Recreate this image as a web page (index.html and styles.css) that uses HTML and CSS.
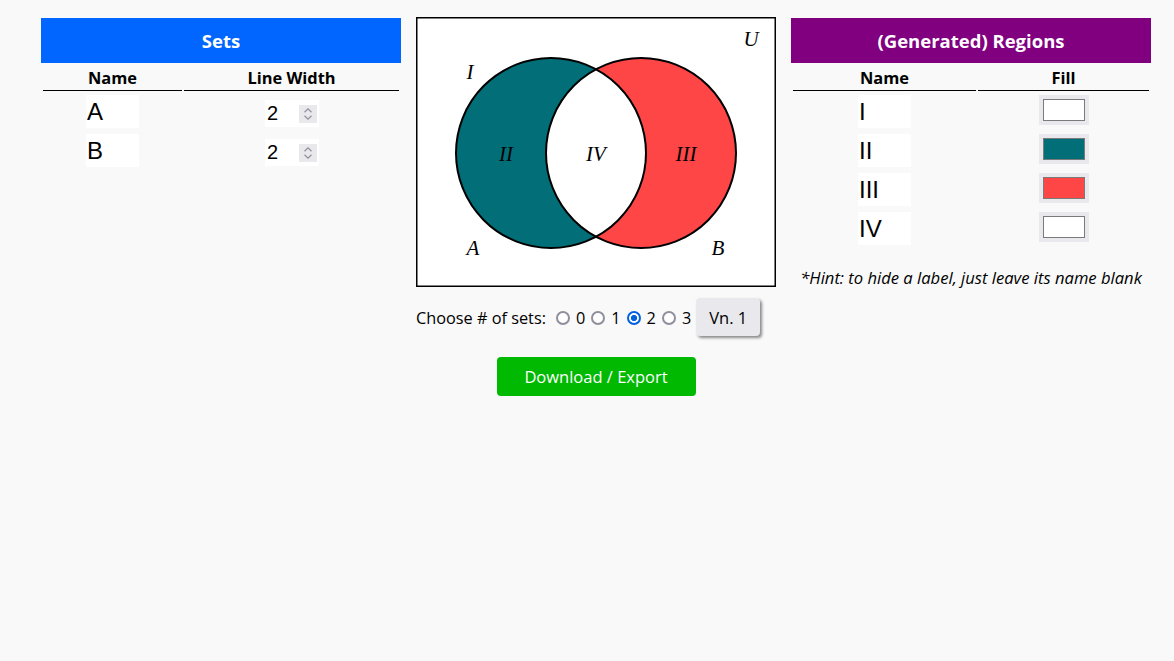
FILE: index.html
```html
<!DOCTYPE html>
<html>
<head>
<meta charset="utf-8">
<link rel="stylesheet" href="styles.css">
</head>
<body>
<div class="page">
  <section class="panel">
    <h2 class="panel-head sets-head">Sets</h2>
    <div class="grid sets-grid">
      <div class="th">Name</div>
      <div class="th">Line Width</div>
      <div class="cell"><input class="name-input" type="text" value="A"></div>
      <div class="cell">
        <div class="num-box">
          <input class="num-input" type="text" value="2">
          <span class="spin"><svg width="18" height="18" viewBox="0 0 18 18"><path d="M5.5 7.2 L9 3.8 L12.5 7.2 M5.5 10.8 L9 14.2 L12.5 10.8" fill="none" stroke="#8f8f9d" stroke-width="1.2"/></svg></span>
        </div>
      </div>
      <div class="cell"><input class="name-input" type="text" value="B"></div>
      <div class="cell">
        <div class="num-box">
          <input class="num-input" type="text" value="2">
          <span class="spin"><svg width="18" height="18" viewBox="0 0 18 18"><path d="M5.5 7.2 L9 3.8 L12.5 7.2 M5.5 10.8 L9 14.2 L12.5 10.8" fill="none" stroke="#8f8f9d" stroke-width="1.2"/></svg></span>
        </div>
      </div>
    </div>
  </section>

  <section class="middle">
    <div class="venn">
      <svg width="360" height="270" viewBox="0 0 360 270">
        <rect x="0.75" y="0.75" width="358.5" height="268.5" fill="#fff" stroke="#000" stroke-width="1.5"/>
        <circle cx="135" cy="136" r="95" fill="#026f78"/>
        <circle cx="225" cy="136" r="95" fill="#ff4646"/>
        <path d="M180,52.33 A95,95 0 0,1 180,219.67 A95,95 0 0,1 180,52.33 Z" fill="#fff"/>
        <circle cx="135" cy="136" r="95" fill="none" stroke="#000" stroke-width="2"/>
        <circle cx="225" cy="136" r="95" fill="none" stroke="#000" stroke-width="2"/>
        <g class="lbl">
          <text x="335" y="22">U</text>
          <text x="54" y="55">I</text>
          <text x="57" y="231">A</text>
          <text x="302" y="231">B</text>
          <text x="90" y="137">II</text>
          <text x="180" y="137">IV</text>
          <text x="270" y="137">III</text>
        </g>
      </svg>
    </div>
    <div class="choose">
      <span class="choose-label">Choose # of sets:</span>
      <label class="opt"><input type="radio" name="n">0</label>
      <label class="opt"><input type="radio" name="n">1</label>
      <label class="opt"><input type="radio" name="n" checked>2</label>
      <label class="opt"><input type="radio" name="n">3</label>
      <button class="vn">Vn. 1</button>
    </div>
    <button class="download">Download / Export</button>
  </section>

  <section class="panel">
    <h2 class="panel-head regions-head">(Generated) Regions</h2>
    <div class="grid regions-grid">
      <div class="th">Name</div>
      <div class="th">Fill</div>
      <div class="cell"><input class="name-input" type="text" value="I"></div>
      <div class="cell"><input class="color-input" type="color" value="#ffffff"></div>
      <div class="cell"><input class="name-input" type="text" value="II"></div>
      <div class="cell"><input class="color-input" type="color" value="#026f78"></div>
      <div class="cell"><input class="name-input" type="text" value="III"></div>
      <div class="cell"><input class="color-input" type="color" value="#ff4646"></div>
      <div class="cell"><input class="name-input" type="text" value="IV"></div>
      <div class="cell"><input class="color-input" type="color" value="#ffffff"></div>
    </div>
    <p class="hint">*Hint: to hide a label, just leave its name blank</p>
  </section>
</div>
</body>
</html>
```

FILE: styles.css
```css
html, body {
  margin: 0;
  padding: 0;
  background: #f9f9f9;
  font-family: "Open Sans", "Noto Sans", sans-serif;
  color: #000;
}

.page {
  display: flex;
  align-items: flex-start;
  gap: 15px;
  padding: 17px 0 0 41px;
}

.panel {
  width: 360px;
  margin-top: 1px;
}

.panel-head {
  margin: 0;
  height: 45px;
  line-height: 45px;
  text-align: center;
  color: #fff;
  font-size: 18.5px;
  font-weight: 700;
}

.sets-head { background: #0066ff; }
.regions-head { background: #800080; }

.grid {
  display: grid;
  column-gap: 2px;
  row-gap: 6px;
  padding: 0 2px;
}

.sets-grid { grid-template-columns: 139px 215px; }
.regions-grid { grid-template-columns: 183px 171px; }

.th {
  font-size: 16.4px;
  font-weight: 700;
  text-align: center;
  height: 27px;
  line-height: 30px;
  border-bottom: 1px solid #000;
  margin-bottom: -2px;
}

.cell {
  display: flex;
  justify-content: center;
  align-items: flex-start;
  height: 33px;
}

.name-input {
  box-sizing: border-box;
  width: 53px;
  height: 33px;
  border: none;
  outline: none;
  background: #fff;
  padding: 0 1px;
  font-family: "Liberation Sans", Arial, sans-serif;
  font-size: 24px;
  color: #000;
}

.num-box {
  box-sizing: border-box;
  width: 54px;
  height: 27px;
  margin-top: 5px;
  margin-left: 1px;
  background: #fff;
  display: flex;
  align-items: center;
  padding: 0 2px 0 2px;
}

.num-input {
  width: 32px;
  height: 25px;
  border: none;
  outline: none;
  background: transparent;
  padding: 0;
  font-family: "Liberation Sans", Arial, sans-serif;
  font-size: 20px;
  color: #000;
}

.spin {
  width: 18px;
  height: 18px;
  background: #e9e9ed;
  display: block;
}

.spin svg { display: block; }

.color-input {
  -webkit-appearance: none;
  appearance: none;
  box-sizing: border-box;
  width: 50px;
  height: 30px;
  margin: 0;
  padding: 4px;
  border: none;
  border-radius: 0;
  background: #e9e9ed;
}

.color-input::-webkit-color-swatch-wrapper { padding: 0; }
.color-input::-webkit-color-swatch {
  border: 1px solid #7a7a7a;
  border-radius: 0;
}

.middle {
  width: 360px;
  display: flex;
  flex-direction: column;
  align-items: center;
}

.venn {
  width: 360px;
  height: 270px;
}

.venn svg { display: block; }

.lbl text {
  font-family: "Liberation Serif", "Times New Roman", serif;
  font-style: italic;
  font-size: 21px;
  text-anchor: middle;
  dominant-baseline: central;
  fill: #000;
}

.choose {
  align-self: stretch;
  display: flex;
  align-items: center;
  margin-top: 11px;
  font-size: 16.3px;
  line-height: 24px;
}

.choose-label { margin-right: 4px; padding-top: 1px; }

.opt {
  display: flex;
  align-items: center;
  padding-top: 1px;
}

.opt input {
  -webkit-appearance: none;
  appearance: none;
  box-sizing: border-box;
  width: 14px;
  height: 14px;
  margin: 0 6px 0 6px;
  border: 2px solid #8f8f9d;
  border-radius: 50%;
  background: #fff;
}

.opt input:checked {
  border-color: #0060df;
  background: radial-gradient(circle, #0060df 0 2.8px, #fff 3.3px);
}

.vn {
  margin-left: 5px;
  width: 64px;
  height: 38px;
  border: none;
  border-radius: 4px;
  background: #e9e9ed;
  box-shadow: 2px 2px 3px rgba(0, 0, 0, 0.45);
  font-family: "Open Sans", sans-serif;
  font-size: 16.5px;
  color: #000;
}

.download {
  margin-top: 21px;
  width: 199px;
  height: 39px;
  border: none;
  border-radius: 4px;
  background: #00b900;
  color: #fff;
  font-family: "Open Sans", sans-serif;
  font-size: 16.5px;
}

.hint {
  margin: 21px 0 0;
  text-align: center;
  font-style: italic;
  font-size: 16.6px;
}
```
